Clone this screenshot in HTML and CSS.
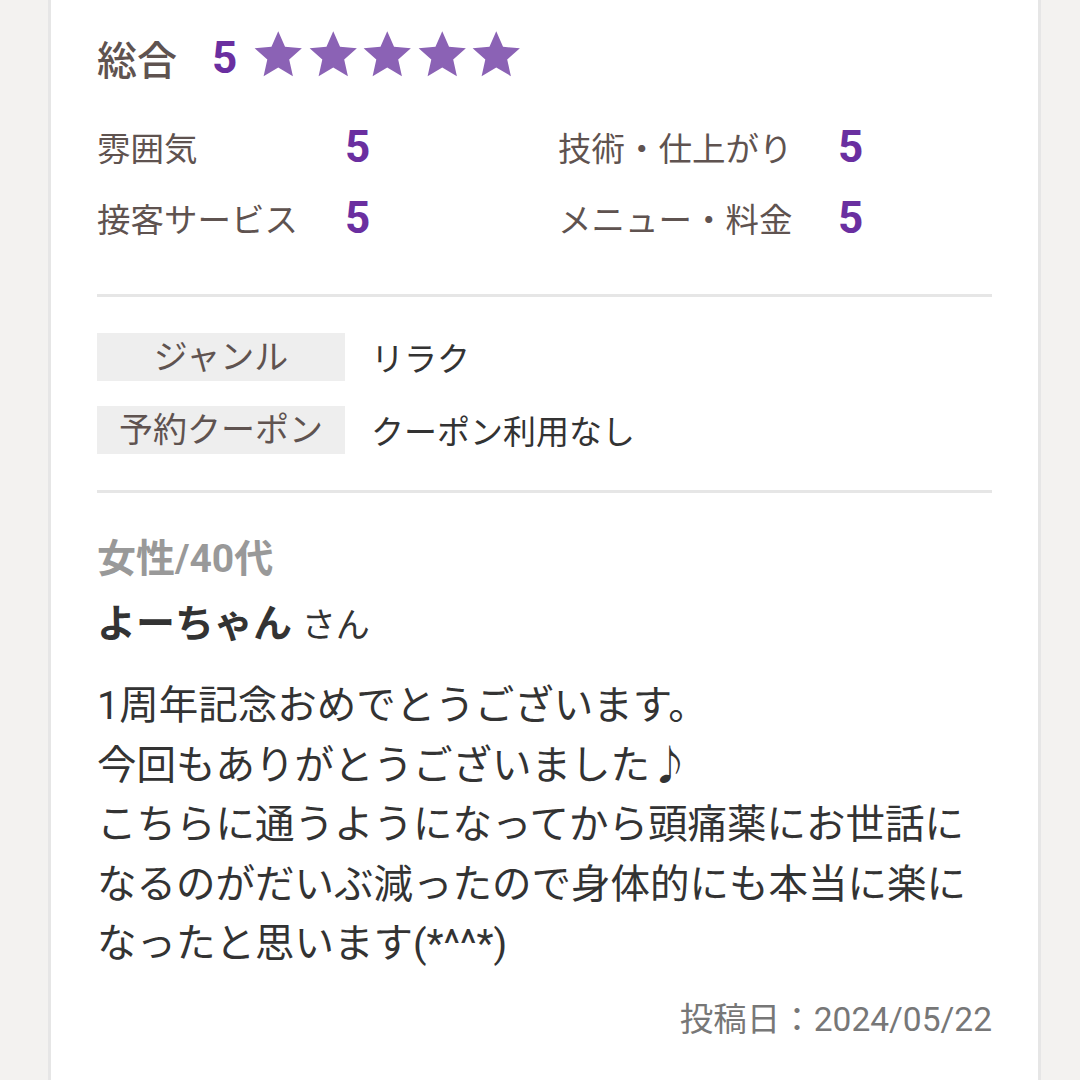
FILE: index.html
```html
<!DOCTYPE html>
<html lang="ja">
<head>
    <meta charset="UTF-8">
    <meta name="viewport" content="width=device-width, initial-scale=1.0">
    <title>口コミ</title>
    <link rel="stylesheet" href="styles.css">
</head>
<body>

<div class="review">
    <div class="total">
        <span class="total-label">総合</span>
        <span class="total-score">5</span>
        <span class="stars">
            <svg class="star" viewBox="0 0 24 24"><polygon points="12,1.5 15.1,8.6 22.8,9.3 17,14.4 18.7,22 12,18 5.3,22 7,14.4 1.2,9.3 8.9,8.6"/></svg>
            <svg class="star" viewBox="0 0 24 24"><polygon points="12,1.5 15.1,8.6 22.8,9.3 17,14.4 18.7,22 12,18 5.3,22 7,14.4 1.2,9.3 8.9,8.6"/></svg>
            <svg class="star" viewBox="0 0 24 24"><polygon points="12,1.5 15.1,8.6 22.8,9.3 17,14.4 18.7,22 12,18 5.3,22 7,14.4 1.2,9.3 8.9,8.6"/></svg>
            <svg class="star" viewBox="0 0 24 24"><polygon points="12,1.5 15.1,8.6 22.8,9.3 17,14.4 18.7,22 12,18 5.3,22 7,14.4 1.2,9.3 8.9,8.6"/></svg>
            <svg class="star" viewBox="0 0 24 24"><polygon points="12,1.5 15.1,8.6 22.8,9.3 17,14.4 18.7,22 12,18 5.3,22 7,14.4 1.2,9.3 8.9,8.6"/></svg>
        </span>
    </div>

    <div class="scores">
        <span class="score-label">雰囲気</span>
        <span class="score-value">5</span>
        <span class="score-label">技術・仕上がり</span>
        <span class="score-value">5</span>
        <span class="score-label">接客サービス</span>
        <span class="score-value">5</span>
        <span class="score-label">メニュー・料金</span>
        <span class="score-value">5</span>
    </div>

    <hr class="divider">

    <div class="info">
        <div class="info-row">
            <span class="info-label">ジャンル</span>
            <span class="info-value">リラク</span>
        </div>
        <div class="info-row">
            <span class="info-label">予約クーポン</span>
            <span class="info-value">クーポン利用なし</span>
        </div>
    </div>

    <hr class="divider divider-bottom">

    <div class="reviewer">
        <div class="reviewer-attr">女性/40代</div>
        <div class="reviewer-name">よーちゃん <span class="honorific">さん</span></div>
    </div>

    <p class="comment">1周年記念おめでとうございます。<br>今回もありがとうございました♪<br>こちらに通うようになってから頭痛薬にお世話になるのがだいぶ減ったので身体的にも本当に楽になったと思います(*^^*)</p>

    <div class="posted">投稿日：2024/05/22</div>
</div>

</body>
</html>
```

FILE: styles.css
```css
body {
    margin: 0;
    background-color: #f3f2f0;
    font-family: Roboto, "Noto Sans CJK JP", sans-serif;
    color: #333;
}

.review {
    background-color: #fff;
    margin-left: 48px;
    width: 993px;
    min-height: 1080px;
    box-sizing: border-box;
    border-left: 3px solid #e6e6e6;
    border-right: 3px solid #e6e6e6;
    padding: 30px 46px 0 46px;
}

/* 総合 */
.total {
    display: flex;
    align-items: center;
    height: 56px;
}

.total-label {
    font-size: 40px;
    font-weight: 500;
    color: #5f5350;
    margin-right: 35px;
}

.total-score {
    font-size: 44px;
    font-weight: 700;
    color: #6a2fa0;
    margin-right: 15px;
}

.stars {
    display: flex;
    gap: 2px;
    margin-top: -8px;
}

.star {
    width: 52.5px;
    height: 52.5px;
    fill: #8b62b5;
}

/* 各項目 */
.scores {
    display: grid;
    grid-template-columns: 248px 213px 280px 1fr;
    grid-auto-rows: 71px;
    align-items: center;
    margin-top: 25px;
}

.score-label {
    font-size: 33.5px;
    color: #5f5350;
}

.score-value {
    font-size: 44px;
    font-weight: 700;
    color: #6a2fa0;
}

.divider {
    border: none;
    border-top: 3px solid #e6e6e6;
    margin: 41px 0 0 0;
}

.divider-bottom {
    margin-top: 0;
}

/* ジャンル・クーポン */
.info {
    display: flex;
    flex-direction: column;
    gap: 25px;
    margin: 36px 0 36px 0;
}

.info-row {
    display: flex;
    align-items: center;
}

.info-label {
    width: 248px;
    height: 48px;
    line-height: 48px;
    background-color: #eeeeee;
    text-align: center;
    font-size: 34px;
    color: #5f5350;
}

.info-value {
    margin-left: 26px;
    font-size: 33px;
    color: #333;
}

/* 投稿者 */
.reviewer {
    margin-top: 38px;
}

.reviewer-attr {
    font-size: 39px;
    font-weight: 700;
    color: #999;
    line-height: 56px;
}

.reviewer-name {
    font-size: 39px;
    font-weight: 700;
    color: #333;
    line-height: 56px;
    margin-top: 9px;
}

.honorific {
    font-size: 34px;
    font-weight: 400;
}

.comment {
    margin: 23px 0 0 0;
    font-size: 39.5px;
    line-height: 59.5px;
    color: #333;
}

.posted {
    text-align: right;
    font-size: 33.5px;
    line-height: 40px;
    color: #777;
    margin-top: 26px;
}
```
